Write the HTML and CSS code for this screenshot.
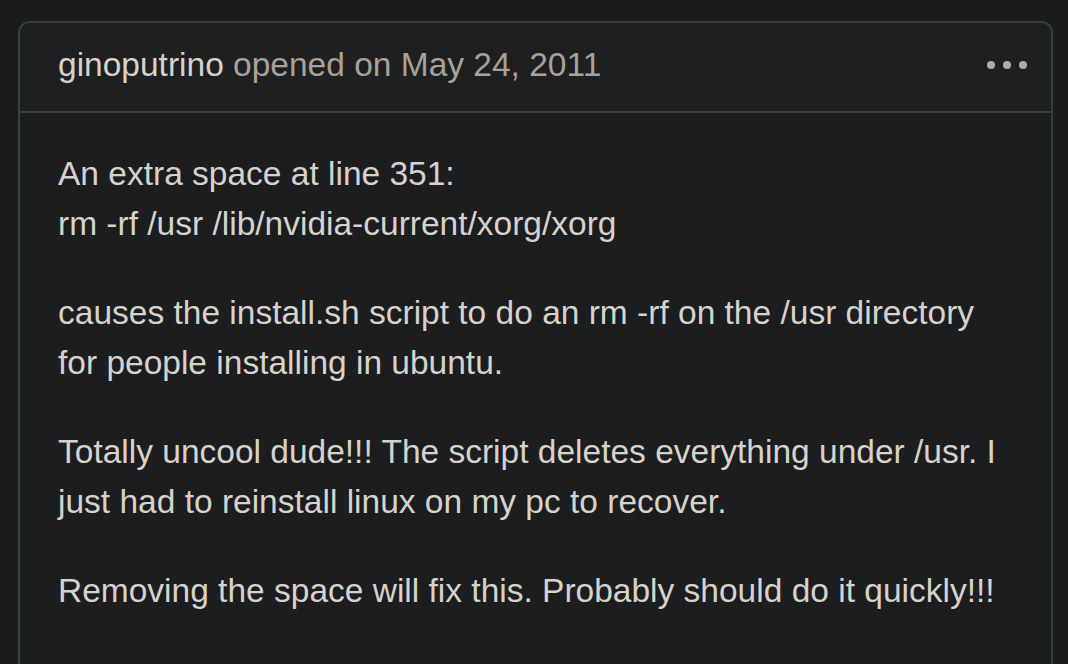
FILE: index.html
```html
<!DOCTYPE html>
<html>
<head>
<meta charset="utf-8">
<link rel="stylesheet" href="styles.css">
</head>
<body>
<div class="page">
  <div class="card">
    <div class="card-header">
      <div class="meta"><span class="author">ginoputrino</span> opened on May 24, 2011</div>
      <div class="dots"><span></span><span></span><span></span></div>
    </div>
    <div class="card-body">
      <p>An extra space at line 351:<br>rm -rf /usr /lib/nvidia-current/xorg/xorg</p>
      <p>causes the install.sh script to do an rm -rf on the /usr directory for people installing in ubuntu.</p>
      <p>Totally uncool dude!!! The script deletes everything under /usr. I just had to reinstall linux on my pc to recover.</p>
      <p>Removing the space will fix this. Probably should do it quickly!!!</p>
    </div>
  </div>
</div>
</body>
</html>
```
FILE: styles.css
```css
html, body {
  margin: 0;
  padding: 0;
  background: #1b1c1e;
  height: 100%;
  overflow: hidden;
}
.page {
  padding: 21px 15px 0 18px;
  font-family: "Liberation Sans", Arial, sans-serif;
  font-size: 33.5px;
  color: #d6d2cc;
}
.card {
  border: 2px solid #3a4040;
  border-radius: 12px;
  background: #1c1d1f;
}
.card-header {
  display: flex;
  align-items: center;
  justify-content: space-between;
  padding: 17px 24px 21px 38px;
  line-height: 50px;
  background: #1e1f21;
  border-bottom: 2px solid #3a4040;
  border-radius: 10px 10px 0 0;
}
.meta {
  color: #a9a298;
}
.author {
  color: #d6d2cc;
}
.dots {
  display: flex;
  gap: 8px;
  margin-top: 0;
}
.dots span {
  width: 8px;
  height: 8px;
  border-radius: 50%;
  background: #b3aca3;
}
.card-body {
  padding: 36px 38px 60px 38px;
  line-height: 50px;
}
.card-body p {
  margin: 0 0 39px 0;
}
```
